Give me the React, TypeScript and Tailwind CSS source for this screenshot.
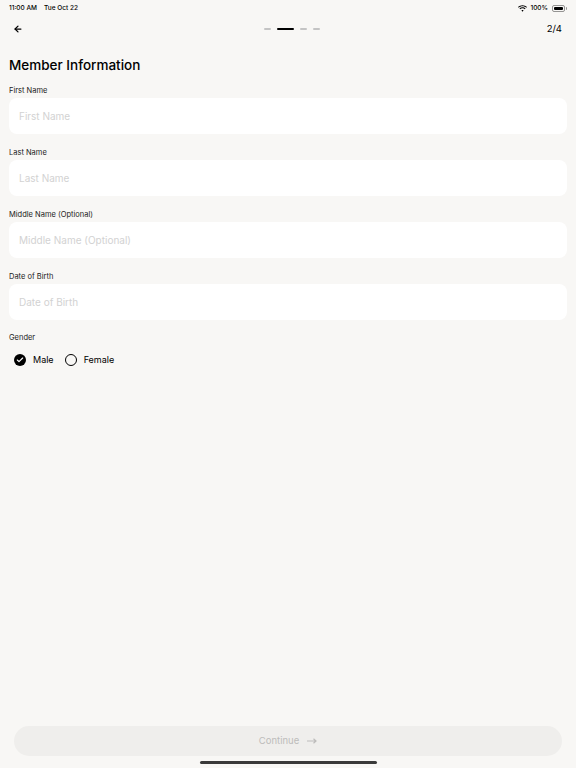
import { ArrowLeft, Check } from 'lucide-react';

const fields = ['First Name', 'Last Name', 'Middle Name (Optional)', 'Date of Birth'];

function StatusBar() {
  return (
    <div className="flex h-[14px] items-center justify-between px-[9px] pt-[3px] text-[6.5px] font-medium text-black">
      <div className="flex gap-[7px]">
        <span>11:00 AM</span>
        <span>Tue Oct 22</span>
      </div>
      <div className="flex items-center gap-[3px]">
        <svg width="9" height="7" viewBox="0 0 18 13" fill="black">
          <path d="M9 2.2c2.9 0 5.5 1.1 7.5 3l1.4-1.5C15.6 1.4 12.4 0 9 0S2.4 1.4.1 3.7l1.4 1.5c2-1.9 4.6-3 7.5-3z" />
          <path d="M9 6c1.8 0 3.4.7 4.7 1.8l1.4-1.5C13.5 4.8 11.3 3.9 9 3.9S4.5 4.8 2.9 6.3l1.4 1.5C5.6 6.7 7.2 6 9 6z" />
          <path d="M9 9.7c.8 0 1.4.3 2 .8L9 13l-2-2.5c.6-.5 1.2-.8 2-.8z" />
        </svg>
        <span>100%</span>
        <div className="ml-[1px] flex items-center">
          <div className="h-[7px] w-[13px] rounded-[2px] border border-black/40 p-px">
            <div className="h-full w-full rounded-[1px] bg-black" />
          </div>
          <div className="ml-px h-[3px] w-[1px] rounded-r bg-black/40" />
        </div>
      </div>
    </div>
  );
}

function Field({ label }: { label: string }) {
  return (
    <div className="flex flex-col">
      <label className="h-[10px] text-[7.5px] leading-[10px] text-[#1a1a1a]">{label}</label>
      <input
        placeholder={label}
        className="mt-[2px] h-[36px] rounded-[8px] bg-white px-[10px] text-[10px] text-black outline-none placeholder:text-[#d2d2d2]"
      />
    </div>
  );
}

export default function App() {
  return (
    <div
      className="flex h-[768px] w-[576px] flex-col bg-[#f8f7f5]"
      style={{ fontFamily: 'Inter, "Noto Sans", sans-serif' }}
    >
      <StatusBar />

      {/* Nav */}
      <div className="flex h-[28px] items-center justify-between px-[13px] pt-[2px]">
        <ArrowLeft size={10} strokeWidth={3} className="text-black" />
        <div className="flex items-center gap-[6px] pl-[14px]">
          <div className="h-[2px] w-[7px] rounded bg-[#c4c4c4]" />
          <div className="h-[2.5px] w-[17px] rounded bg-black" />
          <div className="h-[2px] w-[7px] rounded bg-[#c4c4c4]" />
          <div className="h-[2px] w-[7px] rounded bg-[#c4c4c4]" />
        </div>
        <span className="pr-px text-[9.5px] text-black">2/4</span>
      </div>

      {/* Form */}
      <div className="flex flex-col px-[9px] pt-[13px]">
        <h1 className="h-[20px] text-[13.5px] font-medium leading-[20px] text-black">
          Member Information
        </h1>
        <div className="mt-[11px] flex flex-col gap-[14px]">
          {fields.map((f) => (
            <Field key={f} label={f} />
          ))}
        </div>

        <div className="mt-[13px] h-[10px] text-[7.5px] leading-[10px] text-[#1a1a1a]">Gender</div>
        <div className="mt-[11px] flex h-[12px] items-center pl-[5px]">
          <div className="flex items-center">
            <div className="flex h-[12px] w-[12px] items-center justify-center rounded-full bg-black">
              <Check size={8} strokeWidth={3.5} className="text-white" />
            </div>
            <span className="ml-[7px] text-[9px] text-black">Male</span>
          </div>
          <div className="ml-[11px] flex items-center">
            <div className="h-[12px] w-[12px] rounded-full border-[1.5px] border-black" />
            <span className="ml-[7px] text-[9px] text-black">Female</span>
          </div>
        </div>
      </div>

      {/* Footer */}
      <div className="mt-auto flex flex-col items-center px-[14px] pb-[4px]">
        <button className="flex h-[30px] w-full items-center justify-center gap-[8px] rounded-full bg-[#efeeec] text-[9.5px] text-[#bdbcbb]">
          <span>Continue</span>
          <svg width="10" height="6" viewBox="0 0 10 6" fill="none" stroke="currentColor" strokeWidth="1.2">
            <path d="M0 3h9M6.5 0.8L9 3 6.5 5.2" />
          </svg>
        </button>
        <div className="mt-[5px] h-[3px] w-[177px] rounded-full bg-[#3a3a3a]" />
      </div>
    </div>
  );
}
